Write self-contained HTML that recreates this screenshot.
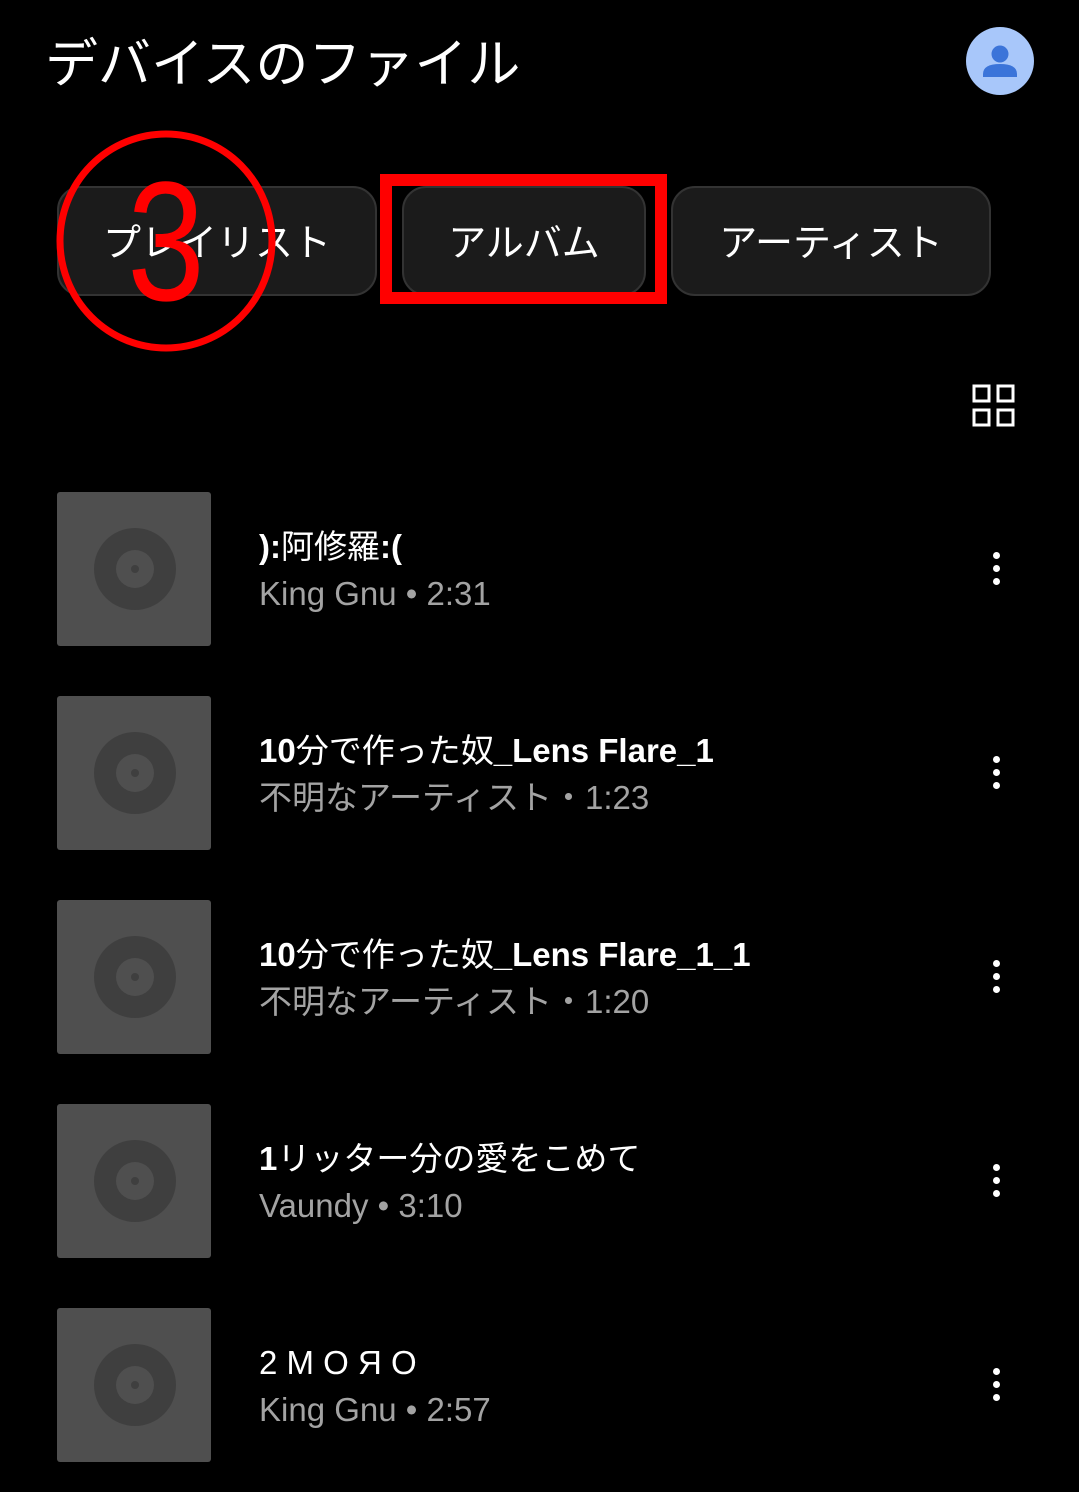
<!DOCTYPE html>
<html><head><meta charset="utf-8"><style>
html,body{margin:0;padding:0;background:#000;}
body{width:1079px;height:1492px;position:relative;overflow:hidden;font-family:"Liberation Sans","Noto Sans CJK JP",sans-serif;color:#fff;}
.abs{position:absolute;}
.title{left:45px;top:31px;font-size:53px;line-height:68px;white-space:nowrap;}
.avatar{left:966px;top:27px;width:68px;height:68px;border-radius:50%;background:#a8c7fa;}
.btn{top:186px;height:110px;border:2px solid #333;background:#1b1b1b;border-radius:24px;box-sizing:border-box;font-size:38px;line-height:112px;text-align:center;white-space:nowrap;}
.thumb{left:57px;width:154px;height:154px;background:#4f4f4f;border-radius:3px;}
.t1{left:259px;font-size:33px;font-weight:bold;white-space:nowrap;line-height:40px;}
.t1 .j{font-weight:normal;}
.t2{left:259px;font-size:33px;color:#a3a3a3;white-space:nowrap;line-height:40px;}
.dots{left:993px;width:8px;}
.dots i{display:block;width:7px;height:7px;border-radius:50%;background:#fff;margin-bottom:6px;}
</style></head><body>
<div class="abs title">デバイスのファイル</div>
<div class="abs avatar"><svg width="68" height="68" viewBox="0 0 68 68"><circle cx="34" cy="27" r="8.5" fill="#3b74d9"/><path d="M17 47 q0-10 17-10 q17 0 17 10 v3 h-34z" fill="#3b74d9"/></svg></div>

<div class="abs btn" style="left:57px;width:320px;">プレイリスト</div>
<div class="abs btn" style="left:402px;width:244px;">アルバム</div>
<div class="abs btn" style="left:671px;width:320px;">アーティスト</div>

<div class="abs" style="left:380px;top:174px;width:287px;height:130px;border:12px solid #f00;box-sizing:border-box;"></div>
<svg class="abs" style="left:0;top:120px" width="320" height="250"><ellipse cx="166" cy="121" rx="106" ry="107" fill="none" stroke="#f00" stroke-width="7"/><text x="0" y="0" text-anchor="middle" font-family="Liberation Sans Narrow,Liberation Sans,sans-serif" font-size="170" fill="#f00" transform="translate(166,180) scale(0.82,1)">3</text></svg>

<svg class="abs" style="left:972px;top:384px" width="44" height="43"><g fill="none" stroke="#fff" stroke-width="3"><rect x="2" y="2" width="15" height="15"/><rect x="26" y="2" width="15" height="15"/><rect x="2" y="26" width="15" height="15"/><rect x="26" y="26" width="15" height="15"/></g></svg>

<div class="abs thumb" style="top:492px"><svg width="154" height="154"><circle cx="78" cy="77" r="41" fill="#3f3f3f"/><circle cx="78" cy="77" r="19" fill="#4f4f4f"/><circle cx="78" cy="77" r="4" fill="#3f3f3f"/></svg></div>
<div class="abs t1" style="top:527px">):<span class="j">阿修羅</span>:(</div>
<div class="abs t2" style="top:574px">King Gnu • 2:31</div>
<div class="abs dots" style="top:552px"><i></i><i></i><i></i></div>

<div class="abs thumb" style="top:696px"><svg width="154" height="154"><circle cx="78" cy="77" r="41" fill="#3f3f3f"/><circle cx="78" cy="77" r="19" fill="#4f4f4f"/><circle cx="78" cy="77" r="4" fill="#3f3f3f"/></svg></div>
<div class="abs t1" style="top:731px">10<span class="j">分で作った奴</span>_Lens Flare_1</div>
<div class="abs t2" style="top:778px">不明なアーティスト・1:23</div>
<div class="abs dots" style="top:756px"><i></i><i></i><i></i></div>

<div class="abs thumb" style="top:900px"><svg width="154" height="154"><circle cx="78" cy="77" r="41" fill="#3f3f3f"/><circle cx="78" cy="77" r="19" fill="#4f4f4f"/><circle cx="78" cy="77" r="4" fill="#3f3f3f"/></svg></div>
<div class="abs t1" style="top:935px">10<span class="j">分で作った奴</span>_Lens Flare_1_1</div>
<div class="abs t2" style="top:982px">不明なアーティスト・1:20</div>
<div class="abs dots" style="top:960px"><i></i><i></i><i></i></div>

<div class="abs thumb" style="top:1104px"><svg width="154" height="154"><circle cx="78" cy="77" r="41" fill="#3f3f3f"/><circle cx="78" cy="77" r="19" fill="#4f4f4f"/><circle cx="78" cy="77" r="4" fill="#3f3f3f"/></svg></div>
<div class="abs t1" style="top:1139px">1<span class="j">リッター分の愛をこめて</span></div>
<div class="abs t2" style="top:1186px">Vaundy • 3:10</div>
<div class="abs dots" style="top:1164px"><i></i><i></i><i></i></div>

<div class="abs thumb" style="top:1308px"><svg width="154" height="154"><circle cx="78" cy="77" r="41" fill="#3f3f3f"/><circle cx="78" cy="77" r="19" fill="#4f4f4f"/><circle cx="78" cy="77" r="4" fill="#3f3f3f"/></svg></div>
<div class="abs t1" style="top:1343px;font-weight:normal;word-spacing:-2px;letter-spacing:1px">2 M O Я O</div>
<div class="abs t2" style="top:1390px">King Gnu • 2:57</div>
<div class="abs dots" style="top:1368px"><i></i><i></i><i></i></div>
</body></html>
